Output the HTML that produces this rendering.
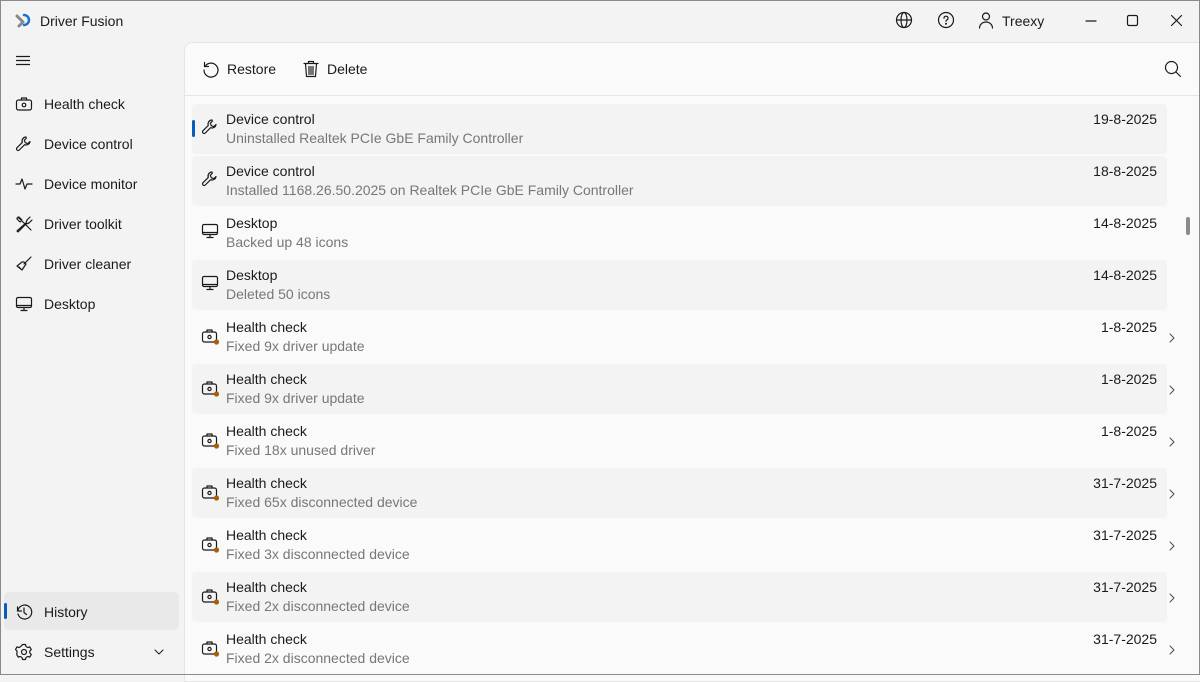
<!DOCTYPE html>
<html><head><meta charset="utf-8"><style>
*{box-sizing:border-box;margin:0;padding:0}
body{width:1200px;height:675px;overflow:hidden;background:#f3f3f3;font-family:"Segoe UI","Liberation Sans",sans-serif;font-size:14px;color:#1a1a1a;position:relative}
.frame{position:absolute;inset:0;border:1px solid #8a8a8a;pointer-events:none;z-index:9}
.abs{position:absolute}
svg{position:absolute;fill:none;stroke:#1a1a1a;stroke-width:1.2;stroke-linecap:round;stroke-linejoin:round}
.nav{position:absolute;left:44px;font-size:14px;margin-top:1px}
.panel{position:absolute;left:184px;top:42px;width:1020px;height:640px;background:#fafafa;border:1px solid #e5e5e5;border-top-left-radius:8px}
.row{position:absolute;left:192px;width:975px;height:50px;border-radius:4px}
.g{background:#f3f3f3}
.t1{position:absolute;left:34px;top:7px;font-size:14px;color:#1a1a1a}
.t2{position:absolute;left:34px;top:26px;font-size:14px;color:#777}
.d{position:absolute;right:10px;top:7px;font-size:14px;color:#1a1a1a}
.chev{position:absolute;right:-10px;top:20px}
</style></head><body>
<div class="frame"></div>
<svg style="left:14px;top:12px" width="18" height="18" viewBox="0 0 18 18"><path d="M3 4l6 6-4 4" stroke="#888" stroke-width="3"/><path d="M10 3a5 5 0 1 1 0 10" stroke="#1a73d0" stroke-width="2.5"/></svg>
<div class="abs" style="left:40px;top:13px;font-size:14px">Driver Fusion</div>
<svg style="left:895px;top:11px" width="18" height="18" viewBox="0 0 18 18"><circle cx="9" cy="9" r="7.5"/><ellipse cx="9" cy="9" rx="3" ry="7.5"/><path d="M1.5 9h15"/></svg>
<svg style="left:937px;top:11px" width="18" height="18" viewBox="0 0 18 18"><circle cx="9" cy="9" r="7.5"/><path d="M7 7.2a2 2 0 1 1 2.6 1.9c-.5.2-.6.6-.6 1.2"/><circle cx="9" cy="12.7" r=".4" fill="#1a1a1a"/></svg>
<svg style="left:977px;top:11px" width="18" height="18" viewBox="0 0 18 18"><circle cx="9" cy="5.5" r="3.5"/><path d="M2.5 17a6.5 6 0 0 1 13 0"/></svg>
<div class="abs" style="left:1002px;top:13px">Treexy</div>
<svg style="left:1083px;top:12px" width="16" height="16" viewBox="0 0 16 16"><path d="M3 9h10"/></svg>
<svg style="left:1126px;top:14px" width="14" height="14" viewBox="0 0 14 14"><rect x="1.5" y="1.5" width="10" height="10" rx="1.5"/></svg>
<svg style="left:1170px;top:14px" width="14" height="14" viewBox="0 0 14 14"><path d="M1.5 1.5l10 10M11.5 1.5l-10 10"/></svg>
<svg style="left:15px;top:53px" width="16" height="16" viewBox="0 0 16 16"><path d="M1.5 3.5h13M1.5 7.5h13M1.5 11.5h13"/></svg>
<svg style="left:15px;top:95px" width="18" height="18" viewBox="0 0 18 18"><rect x="1.5" y="5" width="15" height="10" rx="2"/><path d="M6.5 5V3h5v2"/><circle cx="9" cy="10" r="1.8"/></svg>
<div class="nav" style="top:95px">Health check</div>
<svg style="left:15px;top:135px" width="18" height="18" viewBox="0 0 18 18"><path d="M11 2a4 4 0 0 0-3.7 5.4L2 12.7a1.6 1.6 0 0 0 2.3 2.3l5.3-5.3A4 4 0 0 0 15 6.5l-2.3 2.2-2.4-1 -1-2.4L11.5 3"/></svg>
<div class="nav" style="top:135px">Device control</div>
<svg style="left:15px;top:175px" width="18" height="18" viewBox="0 0 18 18"><path d="M1 9h4l2-5 3 10 2-5h5"/></svg>
<div class="nav" style="top:175px">Device monitor</div>
<svg style="left:15px;top:215px" width="18" height="18" viewBox="0 0 18 18"><path d="M3 2l13 13M2 3l2-1 3 3-2 2-3-3zM15 2l-3 3-1 3-9 8 1 1 8-8 3-1 3-3"/></svg>
<div class="nav" style="top:215px">Driver toolkit</div>
<svg style="left:15px;top:255px" width="18" height="18" viewBox="0 0 18 18"><path d="M16 2l-7 7M9 7l2 2-4 6-5-4 5-4zM4 12l2 2"/></svg>
<div class="nav" style="top:255px">Driver cleaner</div>
<svg style="left:15px;top:295px" width="18" height="18" viewBox="0 0 18 18"><rect x="1.5" y="2.5" width="15" height="10" rx="1.5"/><path d="M6 15.5h6M9 12.5v3M1.5 10.5h15"/></svg>
<div class="nav" style="top:295px">Desktop</div>
<div class="abs" style="left:4px;top:592px;width:175px;height:38px;background:#e9e9e9;border-radius:5px"></div>
<div class="abs" style="left:4px;top:603px;width:3px;height:16px;background:#0a5cb8;border-radius:2px"></div>
<svg style="left:15px;top:603px" width="18" height="18" viewBox="0 0 18 18"><path d="M2.5 4v4h4"/><path d="M2.8 8A7 7 0 1 1 3 11"/><path d="M9 5v4.5l2.5 2"/></svg>
<div class="nav" style="top:603px">History</div>
<svg style="left:15px;top:643px" width="18" height="18" viewBox="0 0 18 18"><circle cx="9" cy="9" r="2.5"/><path d="M7.5 1.5h3l.5 2 1.8 1 2-.6 1.5 2.6-1.5 1.5v2l1.5 1.5-1.5 2.6-2-.6-1.8 1-.5 2h-3l-.5-2-1.8-1-2 .6-1.5-2.6L2 10V8L.5 6.5 2 3.9l2 .6 1.8-1z"/></svg>
<div class="nav" style="top:643px">Settings</div>
<svg style="left:153px;top:646px" width="12" height="12" viewBox="0 0 12 12"><path d="M2 4l4 4 4-4" stroke-width="1"/></svg>
<div class="panel"></div>
<div class="abs" style="left:185px;top:95px;width:1015px;height:1px;background:#e5e5e5"></div>
<svg style="left:202px;top:60px" width="18" height="18" viewBox="0 0 18 18"><path d="M2.5 2.5v4h4"/><path d="M3 6.5A7 7 0 1 1 2 10"/></svg>
<div class="abs" style="left:227px;top:61px">Restore</div>
<svg style="left:303px;top:60px" width="16" height="18" viewBox="0 0 16 18"><path d="M1 3.5h14M5.5 3.5V1.5h5v2M2.5 3.5l1 13h9l1-13M6 6.5v8M8 6.5v8M10 6.5v8"/></svg>
<div class="abs" style="left:327px;top:61px">Delete</div>
<svg style="left:1164px;top:60px" width="18" height="18" viewBox="0 0 18 18"><circle cx="7.5" cy="7.5" r="6"/><path d="M12 12l4.5 4.5"/></svg>
<div class="abs" style="left:1186px;top:217px;width:4px;height:18px;background:#8a8a8a;border-radius:2px"></div>

<div class="row g" style="top:104px"><div class="abs" style="left:0;top:16px;width:3px;height:17px;background:#0a5cb8;border-radius:2px"></div><svg style="left:9px;top:14px" width="18" height="18" viewBox="0 0 18 18"><path d="M11 2a4 4 0 0 0-3.7 5.4L2 12.7a1.6 1.6 0 0 0 2.3 2.3l5.3-5.3A4 4 0 0 0 15 6.5l-2.3 2.2-2.4-1 -1-2.4L11.5 3"/></svg><div class="t1">Device control</div><div class="t2">Uninstalled Realtek PCIe GbE Family Controller</div><div class="d">19-8-2025</div></div>
<div class="row g" style="top:156px"><svg style="left:9px;top:14px" width="18" height="18" viewBox="0 0 18 18"><path d="M11 2a4 4 0 0 0-3.7 5.4L2 12.7a1.6 1.6 0 0 0 2.3 2.3l5.3-5.3A4 4 0 0 0 15 6.5l-2.3 2.2-2.4-1 -1-2.4L11.5 3"/></svg><div class="t1">Device control</div><div class="t2">Installed 1168.26.50.2025 on Realtek PCIe GbE Family Controller</div><div class="d">18-8-2025</div></div>
<div class="row" style="top:208px"><svg style="left:9px;top:14px" width="18" height="18" viewBox="0 0 18 18"><rect x="1.5" y="2.5" width="15" height="10" rx="1.5"/><path d="M6 15.5h6M9 12.5v3M1.5 10.5h15"/></svg><div class="t1">Desktop</div><div class="t2">Backed up 48 icons</div><div class="d">14-8-2025</div></div>
<div class="row g" style="top:260px"><svg style="left:9px;top:14px" width="18" height="18" viewBox="0 0 18 18"><rect x="1.5" y="2.5" width="15" height="10" rx="1.5"/><path d="M6 15.5h6M9 12.5v3M1.5 10.5h15"/></svg><div class="t1">Desktop</div><div class="t2">Deleted 50 icons</div><div class="d">14-8-2025</div></div>

<div id="hc"></div>
<script>
var d=[["Fixed 9x driver update","1-8-2025"],["Fixed 9x driver update","1-8-2025"],["Fixed 18x unused driver","1-8-2025"],["Fixed 65x disconnected device","31-7-2025"],["Fixed 3x disconnected device","31-7-2025"],["Fixed 2x disconnected device","31-7-2025"],["Fixed 2x disconnected device","31-7-2025"]];
var h="";d.forEach(function(r,i){h+='<div class="row'+(i%2?' g':'')+'" style="top:'+(312+52*i)+'px"><svg style="left:9px;top:15px" width="20" height="20" viewBox="0 0 20 20"><rect x="1.5" y="5" width="14" height="10" rx="2"/><path d="M6 5V3h5v2"/><circle cx="8.5" cy="10" r="1.6"/><circle cx="15.5" cy="15" r="2.6" fill="#a85f00" stroke="none"/></svg><div class="t1">Health check</div><div class="t2">'+r[0]+'</div><div class="d">'+r[1]+'</div><svg class="chev" width="10" height="12" viewBox="0 0 10 12"><path d="M3 2l4 4-4 4" stroke-width="0.9" stroke="#444"/></svg></div>';});
document.getElementById("hc").innerHTML=h;
</script>
</body></html>
